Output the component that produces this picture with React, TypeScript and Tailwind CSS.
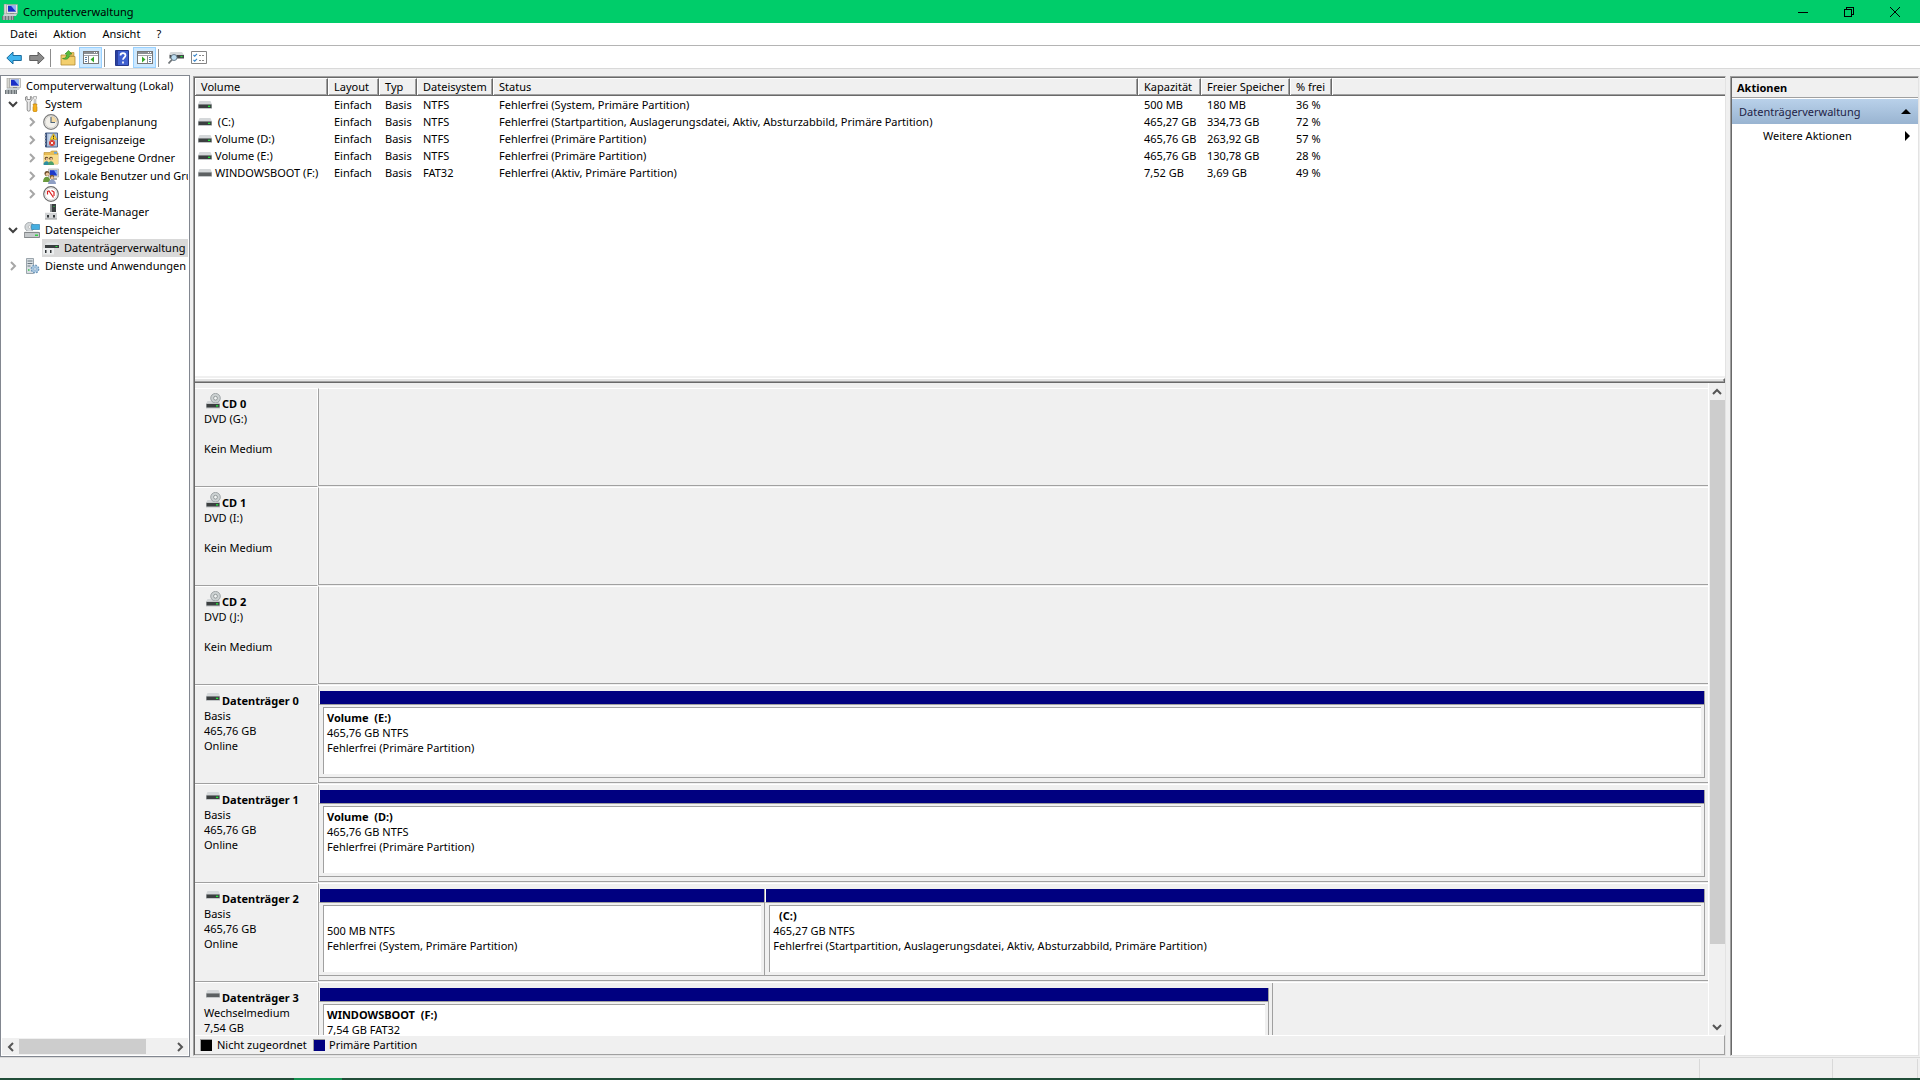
import type { ReactNode } from "react";

type IconProps = { className?: string };

const ComputerIcon = ({ className = "size-4" }: IconProps) => (
  <svg viewBox="0 0 16 16" className={`${className} shrink-0`}>
    <path d="M2 0h3v10H2z" fill="#d8d8d2" stroke="#8a8a86" strokeWidth=".5" />
    <path d="M4.500.5h11v9h-11z" fill="#e6e6e0" stroke="#9a9a98" strokeWidth=".6" />
    <path d="M6 1.700h8v6H6z" fill="#1a2fc8" />
    <path d="M9 1.700h5v6z" fill="#8fb4f4" />
    <path d="M8 9h4v1.500H8z" fill="#8c8c8c" />
    <path d="M2 10h13l-1 2H1z" fill="#c9d0d4" />
    <path d="M0 12h12v4H0z" fill="#6d7478" />
    <path d="M1 13h2m1 0h2m1 0h2m1 0h1M1 15h2m1 0h2m1 0h2m1 0h1" stroke="#e5eaea" strokeWidth=".9" />
  </svg>
);

const ToolsIcon = () => (
  <svg viewBox="0 0 16 16" className="size-4 shrink-0">
    <path
      d="M1.500 1v3.200l1.700 1.600V14c0 1.600 3 1.600 3 0V5.800L8 4.200V1L6.400.5V3.500H3.100V.500z"
      fill="#e9e9e9"
      stroke="#777"
      strokeWidth=".8"
    />
    <path d="M9.500.5h3v2l-.7 1v4h-1.600v-4l-.7-1z" fill="#eee" stroke="#888" strokeWidth=".6" />
    <path d="M9 8h4l-.5 2 .5 1v4c-1 1.200-3 1.200-4 0v-4l.5-1z" fill="#f5b01c" stroke="#b97a08" strokeWidth=".6" />
  </svg>
);

const ClockIcon = () => (
  <svg viewBox="0 0 16 16" className="size-4 shrink-0">
    <circle cx="8" cy="8" r="7.300" fill="#f2f0ea" stroke="#7d7d7d" strokeWidth="1.200" />
    <path d="M8 8V2a6 6 0 0 1 6 6z" fill="#f3d9a2" />
    <circle cx="8" cy="8" r="5.800" fill="none" stroke="#c6c6c6" strokeWidth=".6" />
    <path d="M8 3v5.500h4" fill="none" stroke="#4f6478" strokeWidth="1.100" />
  </svg>
);

const EventIcon = () => (
  <svg viewBox="0 0 16 16" className="size-4 shrink-0">
    <path d="M2.500 1h12v14h-12z" fill="#a8bddb" stroke="#4b628a" />
    <path d="M2 1h2v14H2z" fill="#3e547c" />
    <path d="M1 3h2M1 6h2M1 9h2M1 12h2" stroke="#ccc" />
    <path d="M5.500 3h3M5.500 5h2M5.500 7h2M5.500 9h2M5.500 11h2" stroke="#fff" strokeWidth=".8" />
    <path d="M10.500 1.500 14 7.500H7z" fill="#ffd42a" stroke="#b58c0a" strokeWidth=".5" />
    <path d="M10.500 3.500v2m0 .6v.8" stroke="#222" strokeWidth=".9" />
    <circle cx="9" cy="11" r="3" fill="#d73b30" />
    <path d="m7.800 9.800 2.400 2.400m0-2.400-2.400 2.400" stroke="#fff" strokeWidth=".9" />
  </svg>
);

const SharedFolderIcon = () => (
  <svg viewBox="0 0 16 16" className="size-4 shrink-0">
    <path d="M1 2.500h6l1.500-1.500H14v2h1v11H1z" fill="#e8bd55" stroke="#b78a2a" strokeWidth=".6" />
    <path d="M1 5h14v9H1z" fill="#f8dc8c" />
    <path d="M11 1.800h3v2h-3z" fill="#6aa6d8" />
    <circle cx="3.500" cy="8.500" r="1.800" fill="#5c4326" />
    <circle cx="8" cy="8.500" r="1.800" fill="#5c4326" />
    <circle cx="3.800" cy="9" r="1.200" fill="#e9bf94" />
    <circle cx="8.300" cy="9" r="1.200" fill="#e9bf94" />
    <path d="M.5 15c0-5 6-5 6 0z" fill="#2c8ea0" />
    <path d="M5 15c0-5 6-5 6 0z" fill="#4da06a" />
  </svg>
);

const UsersIcon = () => (
  <svg viewBox="0 0 16 16" className="size-4 shrink-0">
    <path d="M5.500 1h10v8h-10z" fill="#e3e3dc" stroke="#999" strokeWidth=".6" />
    <path d="M6.800 2.200h7.400v5.400H6.800z" fill="#1d39cb" />
    <path d="M11 2.200h3.200v5.400z" fill="#86aef2" />
    <path d="M8 10h6v2H8z" fill="#aaa" />
    <circle cx="4" cy="5.500" r="2.500" fill="#6a4d2c" />
    <circle cx="4.400" cy="6.300" r="1.700" fill="#ecc59c" />
    <path d="M0 14c0-7 7.500-7 7.500 0z" fill="#6a9a3e" />
    <circle cx="9" cy="9" r="2.200" fill="#7b5a30" />
    <circle cx="9.200" cy="9.700" r="1.500" fill="#ecc59c" />
    <path d="M5 16c0-6 8-6 8 0z" fill="#8f9fc4" />
  </svg>
);

const GaugeIcon = () => (
  <svg viewBox="0 0 16 16" className="size-4 shrink-0">
    <circle cx="8" cy="8" r="7.300" fill="#fff" stroke="#6c6c6c" strokeWidth="1.200" />
    <circle cx="8" cy="8" r="5.900" fill="none" stroke="#c4c4c4" strokeWidth=".6" />
    <path d="M4.500 8.500V5.500L6 5l4.500 6.500M8.500 4.500l2.500 1.500v4" fill="none" stroke="#d81f1f" strokeWidth="1.200" />
  </svg>
);

const DeviceManagerIcon = () => (
  <svg viewBox="0 0 16 16" className="size-4 shrink-0">
    <path d="M7.500 0H13v8H7.500z" fill="#3b3f42" />
    <path d="M7.500 0H9v8H7.500z" fill="#8a8e91" />
    <path d="M10.500 2h1v1h-1z" fill="#35e04c" />
    <path d="M2 8h12v7H2z" fill="#d2d4d6" />
    <path d="M2 8h12v1H2z" fill="#f4f4f4" />
    <path d="M4 11h2v2.500H4zm6 0h2v2.500h-2z" fill="#33373a" />
    <path d="M2 14.500h12v1H2z" fill="#9a9c9e" />
  </svg>
);

const StorageIcon = () => (
  <svg viewBox="0 0 16 16" className="size-4 shrink-0">
    <circle cx="5.500" cy="5" r="4.600" fill="#d4d8da" stroke="#8c9296" strokeWidth=".7" />
    <circle cx="5.500" cy="5" r="1.300" fill="#fff" stroke="#999" strokeWidth=".5" />
    <path d="M7.500 2.500h8v5h-8z" fill="#45aee0" stroke="#2379a8" strokeWidth=".6" />
    <path d="M1 9h13l1.500 1.500H0z" fill="#eceeee" />
    <path d="M.3 10.500h15.200v5H.3z" fill="#c4c8ca" stroke="#6d7174" strokeWidth=".8" />
    <path d="M11 12.500h3V14h-3z" fill="#2fd443" />
  </svg>
);

const DiskManagementIcon = () => (
  <svg viewBox="0 0 16 16" className="size-4 shrink-0">
    <path d="M4 2.500h10.500L16 5H2z" fill="#e2e5e6" />
    <path d="M2 5h14v3H2z" fill="#3a3e40" />
    <path d="M12.500 6h2v1h-2z" fill="#2be03f" />
    <path d="M0 8h11v6.500H0z" fill="#eceeef" />
    <path d="M2 10h1.500v3H2zm5 0h1.500v3H7z" fill="#303436" />
  </svg>
);

const ServicesIcon = () => (
  <svg viewBox="0 0 16 16" className="size-4 shrink-0">
    <path d="M2.500.5h7v15h-7z" fill="#d9dfe3" stroke="#87929a" strokeWidth=".8" />
    <path d="M3.500 3h5M3.500 5.500h5M3.500 8h3" stroke="#6a7882" />
    <path d="M4 12h1.500" stroke="#35c248" strokeWidth="1.500" />
    <circle cx="11" cy="11" r="3.600" fill="#a7c6e0" stroke="#6d96ba" strokeWidth="1.600" strokeDasharray="1.700 1.100" />
    <circle cx="11" cy="11" r="3" fill="#a7c6e0" />
    <circle cx="11" cy="11" r="1.200" fill="#fff" stroke="#6d96ba" strokeWidth=".6" />
  </svg>
);

const DriveIcon = ({ removable = false }: { removable?: boolean }) => (
  <svg viewBox="0 0 14 8" className="h-2 w-3.5 shrink-0">
    <path d="M1.500 0h11L14 3.500H0z" fill="#d5d8da" />
    <path d="M0 3h14v5H0z" fill="#c4c7c9" />
    <path d="M.5 3.500h13v3.500H.5z" fill={removable ? "#5c6062" : "#3b3f40"} />
    {!removable && <path d="M10 4.700h2.200V6H10z" fill="#22e83a" />}
  </svg>
);

const OpticalDriveIcon = () => (
  <svg viewBox="0 0 15 16" className="h-4 w-[15px] shrink-0">
    <path d="M1.500 8h11L14 11H0z" fill="#d5d8da" />
    <circle cx="9.500" cy="5.200" r="4.800" fill="#ccd1d2" stroke="#8f9698" strokeWidth=".8" />
    <circle cx="9.500" cy="5.200" r="1.900" fill="#f3f5f5" stroke="#7f8688" strokeWidth=".8" />
    <path d="M0 10h14v5.500H0z" fill="#c4c7c9" />
    <path d="M.5 11h13v3.500H.5z" fill="#3b3f40" />
    <path d="M10 12.200h2.200v1.300H10z" fill="#22e83a" />
  </svg>
);

const ArrowIcon = ({ back = false }: { back?: boolean }) => (
  <svg viewBox="0 0 16 14" className="h-3.5 w-4">
    {back ? (
      <path d="M.8 7 7 1v3.500h8.300v5H7V13z" fill="#3fb4ee" stroke="#1b6c9e" />
    ) : (
      <path d="M15.200 7 9 1v3.500H.7v5H9V13z" fill="#8c8c8c" stroke="#606060" />
    )}
  </svg>
);

const FolderUpIcon = () => (
  <svg viewBox="0 0 16 16" className="size-4">
    <path d="M1 5h5l1.500 1.500H15V15H1z" fill="#f3cf6e" stroke="#b08a34" strokeWidth=".8" />
    <path d="M10.500 2.500H14V6h-3.500z" fill="#e7c15c" stroke="#b08a34" strokeWidth=".6" />
    <path d="M2.500 8.500c3 0 4-1.500 4.300-4.500H5L8.500.5 12 4H9.800c-.3 4.500-3 6.500-7.300 4.500z" fill="#58bb3c" stroke="#2d8120" strokeWidth=".6" />
  </svg>
);

const PaneIcon = ({ right = false }: { right?: boolean }) => (
  <svg viewBox="0 0 16 13" className="h-[13px] w-4" shapeRendering="crispEdges">
    <path d="M.5.5h15v12H.5z" fill="#fff" stroke="#777" />
    <path d="M1 1h14v2H1z" fill="#8a8e94" />
    <path d="M11 1h1v1h-1zm2 0h1v1h-1z" fill="#fff" />
    <path d="M1 4.500h14" stroke="#a3a7ac" />
    <path d={right ? "M10.500 5v7" : "M5.500 5v7"} stroke="#888" />
    <path d={right ? "M12 6.500h2M12 8.500h2M12 10.500h2" : "M2 6.500h2M2 8.500h2M2 10.500h2"} stroke="#5a7ea8" />
    <path d={right ? "M5 5.500v6L8.500 8.500z" : "M11 5.500v6L7.500 8.500z"} fill="#35a82a" shapeRendering="auto" />
  </svg>
);

const HelpIcon = () => (
  <svg viewBox="0 0 14 16" className="h-4 w-3.5">
    <path d="M.5.5h13v15H.5z" fill="#3f5fcf" stroke="#24378c" />
    <path d="M1 1h2v14H1z" fill="#2a409f" />
    <path d="M5.500 5.500c0-3.300 5-3.300 5 0 0 2-2.500 2-2.500 4.300M8 11.500v2" fill="none" stroke="#fff" strokeWidth="1.700" />
  </svg>
);

const RescanIcon = () => (
  <svg viewBox="0 0 16 13" className="h-[13px] w-4">
    <path d="M2.500 1H14l2 3H1z" fill="#d5d8da" />
    <path d="M1.500 4H16v3.500H1.500z" fill="#45494b" />
    <path d="M12.500 5h2v1.200h-2z" fill="#22e83a" />
    <circle cx="6" cy="6.500" r="3" fill="#bcdcf0" stroke="#6b7e8c" />
    <path d="m4 8.700-3.500 3.800" stroke="#707578" strokeWidth="1.700" />
  </svg>
);

const ChecklistIcon = () => (
  <svg viewBox="0 0 16 13" className="h-[13px] w-4">
    <path d="M.5.5h15v12H.5z" fill="#fff" stroke="#858585" />
    <path d="m2.500 4 1.200 1.200L6 2.800M2.500 9l1.200 1.200L6 7.800" fill="none" stroke="#3584c8" strokeWidth="1.100" />
    <path d="M8 4.500h2m1 0h2M8 9.500h2m1 0h2" stroke="#888" />
  </svg>
);

const Chevron = ({ d, className }: { d: string; className: string }) => (
  <svg viewBox="0 0 10 10" className={`size-2.5 shrink-0 ${className}`}>
    <path d={d} fill="none" stroke="currentColor" strokeWidth="2" />
  </svg>
);

const CHEVRON = {
  left: "M7 1 3 5l4 4",
  right: "M3 1l4 4-4 4",
  up: "M1 7l4-4 4 4",
  down: "M1 3l4 4 4-4",
};

type TreeNode = {
  label: string;
  icon: ReactNode;
  level: 0 | 1 | 2;
  state?: "open" | "closed";
  selected?: boolean;
};

const tree: TreeNode[] = [
  { label: "Computerverwaltung (Lokal)", icon: <ComputerIcon />, level: 0 },
  { label: "System", icon: <ToolsIcon />, level: 1, state: "open" },
  { label: "Aufgabenplanung", icon: <ClockIcon />, level: 2, state: "closed" },
  { label: "Ereignisanzeige", icon: <EventIcon />, level: 2, state: "closed" },
  { label: "Freigegebene Ordner", icon: <SharedFolderIcon />, level: 2, state: "closed" },
  { label: "Lokale Benutzer und Gruppen", icon: <UsersIcon />, level: 2, state: "closed" },
  { label: "Leistung", icon: <GaugeIcon />, level: 2, state: "closed" },
  { label: "Geräte-Manager", icon: <DeviceManagerIcon />, level: 2 },
  { label: "Datenspeicher", icon: <StorageIcon />, level: 1, state: "open" },
  { label: "Datenträgerverwaltung", icon: <DiskManagementIcon />, level: 2, selected: true },
  { label: "Dienste und Anwendungen", icon: <ServicesIcon />, level: 1, state: "closed" },
];

const columns = ["Volume", "Layout", "Typ", "Dateisystem", "Status", "Kapazität", "Freier Speicher", "% frei"];

const volumes = [
  ["", "Einfach", "Basis", "NTFS", "Fehlerfrei (System, Primäre Partition)", "500 MB", "180 MB", "36 %"],
  [
    " (C:)",
    "Einfach",
    "Basis",
    "NTFS",
    "Fehlerfrei (Startpartition, Auslagerungsdatei, Aktiv, Absturzabbild, Primäre Partition)",
    "465,27 GB",
    "334,73 GB",
    "72 %",
  ],
  ["Volume (D:)", "Einfach", "Basis", "NTFS", "Fehlerfrei (Primäre Partition)", "465,76 GB", "263,92 GB", "57 %"],
  ["Volume (E:)", "Einfach", "Basis", "NTFS", "Fehlerfrei (Primäre Partition)", "465,76 GB", "130,78 GB", "28 %"],
  ["WINDOWSBOOT (F:)", "Einfach", "Basis", "FAT32", "Fehlerfrei (Aktiv, Primäre Partition)", "7,52 GB", "3,69 GB", "49 %"],
];

type Partition = { name: string; size: string; status?: string; share: number };
type Disk = {
  name: string;
  kind: "optical" | "fixed" | "removable";
  lines: string[];
  partitions: Partition[];
};

const disks: Disk[] = [
  { name: "CD 0", kind: "optical", lines: ["DVD (G:)", "", "Kein Medium"], partitions: [] },
  { name: "CD 1", kind: "optical", lines: ["DVD (I:)", "", "Kein Medium"], partitions: [] },
  { name: "CD 2", kind: "optical", lines: ["DVD (J:)", "", "Kein Medium"], partitions: [] },
  {
    name: "Datenträger 0",
    kind: "fixed",
    lines: ["Basis", "465,76 GB", "Online"],
    partitions: [{ name: "Volume  (E:)", size: "465,76 GB NTFS", status: "Fehlerfrei (Primäre Partition)", share: 100 }],
  },
  {
    name: "Datenträger 1",
    kind: "fixed",
    lines: ["Basis", "465,76 GB", "Online"],
    partitions: [{ name: "Volume  (D:)", size: "465,76 GB NTFS", status: "Fehlerfrei (Primäre Partition)", share: 100 }],
  },
  {
    name: "Datenträger 2",
    kind: "fixed",
    lines: ["Basis", "465,76 GB", "Online"],
    partitions: [
      { name: " ", size: "500 MB NTFS", status: "Fehlerfrei (System, Primäre Partition)", share: 32.2 },
      {
        name: "  (C:)",
        size: "465,27 GB NTFS",
        status: "Fehlerfrei (Startpartition, Auslagerungsdatei, Aktiv, Absturzabbild, Primäre Partition)",
        share: 67.8,
      },
    ],
  },
  {
    name: "Datenträger 3",
    kind: "removable",
    lines: ["Wechselmedium", "7,54 GB"],
    partitions: [{ name: "WINDOWSBOOT  (F:)", size: "7,54 GB FAT32", share: 100 }],
  },
];

const TitleBar = () => (
  <header className="flex h-[23px] shrink-0 items-center bg-[#00cd6a] pr-0.5 pl-0.5">
    <ComputerIcon />
    <h1 className="ml-[5px] flex-1">Computerverwaltung</h1>
    <button aria-label="Minimieren" className="flex h-full w-[46px] items-center justify-center">
      <svg viewBox="0 0 10 10" className="size-2.5" shapeRendering="crispEdges">
        <path d="M0 5.500h10" stroke="#000" />
      </svg>
    </button>
    <button aria-label="Verkleinern" className="flex h-full w-[46px] items-center justify-center">
      <svg viewBox="0 0 10 10" className="size-2.5" shapeRendering="crispEdges">
        <path d="M.5 2.500h7v7h-7zM2.500 2V.5h7v7H8" fill="none" stroke="#000" />
      </svg>
    </button>
    <button aria-label="Schließen" className="flex h-full w-[46px] items-center justify-center">
      <svg viewBox="0 0 10 10" className="size-2.5">
        <path d="M0 0l10 10M10 0 0 10" stroke="#000" />
      </svg>
    </button>
  </header>
);

const MenuBar = () => (
  <nav className="flex h-[23px] shrink-0 items-center gap-4 border-b border-[#b4b4b4] bg-white pl-2.5">
    <button>Datei</button>
    <button>Aktion</button>
    <button>Ansicht</button>
    <button>?</button>
  </nav>
);

const ToolButton = ({ label, active = false, children }: { label: string; active?: boolean; children: ReactNode }) => (
  <button
    aria-label={label}
    className={`flex h-[21px] w-[23px] items-center justify-center border ${
      active ? "border-[#99d1ff] bg-[#cce8ff]" : "border-transparent"
    }`}
  >
    {children}
  </button>
);

const ToolSeparator = () => <span className="mr-[5px] ml-0.5 h-[18px] w-px bg-[#8c8c8c]" />;

const Toolbar = () => (
  <div className="flex h-[23px] shrink-0 items-center border-b border-[#d9d9d9] bg-white pt-px pl-0.5">
    <ToolButton label="Zurück">
      <ArrowIcon back />
    </ToolButton>
    <ToolButton label="Vorwärts">
      <ArrowIcon />
    </ToolButton>
    <ToolSeparator />
    <ToolButton label="Eine Ebene nach oben">
      <FolderUpIcon />
    </ToolButton>
    <ToolButton label="Konsolenstruktur ein-/ausblenden" active>
      <PaneIcon />
    </ToolButton>
    <ToolSeparator />
    <ToolButton label="Hilfe">
      <HelpIcon />
    </ToolButton>
    <ToolButton label="Aktionsbereich ein-/ausblenden" active>
      <PaneIcon right />
    </ToolButton>
    <ToolSeparator />
    <ToolButton label="Datenträger neu einlesen">
      <RescanIcon />
    </ToolButton>
    <ToolButton label="Einstellungen">
      <ChecklistIcon />
    </ToolButton>
  </div>
);

const indents = ["pl-0.5", "pl-[6px]", "pl-[25px]"];

const TreePane = () => (
  <aside className="flex w-[190px] shrink-0 flex-col border border-[#828790] bg-white p-px">
    <ul className="min-h-0 flex-1 overflow-hidden">
      {tree.map((node) => (
        <li key={node.label} className={`flex h-[18px] items-center ${indents[node.level]}`}>
          {node.level > 0 && (
            <span className="mr-[3px] flex w-3">
              {node.state === "open" && <Chevron d={CHEVRON.down} className="text-[#404040]" />}
              {node.state === "closed" && <Chevron d={CHEVRON.right} className="text-[#a6a6a6]" />}
            </span>
          )}
          <span className={`flex h-full min-w-0 flex-1 items-center gap-[5px] pl-px ${node.selected ? "bg-[#d9d9d9]" : ""}`}>
            {node.icon}
            <span className="whitespace-nowrap">{node.label}</span>
          </span>
        </li>
      ))}
    </ul>
    <div className="flex h-[17px] items-center bg-[#f0f0f0]">
      <button aria-label="Nach links" className="flex w-[17px] justify-center">
        <Chevron d={CHEVRON.left} className="text-[#555]" />
      </button>
      <div className="h-[15px] flex-1">
        <div className="h-full w-5/6 bg-[#cdcdcd]" />
      </div>
      <button aria-label="Nach rechts" className="flex w-[17px] justify-center">
        <Chevron d={CHEVRON.right} className="text-[#555]" />
      </button>
    </div>
  </aside>
);

const VolumeList = () => (
  <div className="h-[298px] shrink-0 overflow-hidden bg-white">
    <table className="w-full table-fixed border-separate border-spacing-0 text-left whitespace-nowrap">
      <colgroup>
        <col className="w-[133px]" />
        <col className="w-[51px]" />
        <col className="w-[38px]" />
        <col className="w-[76px]" />
        <col className="w-[645px]" />
        <col className="w-[63px]" />
        <col className="w-[89px]" />
        <col className="w-[42px]" />
        <col />
      </colgroup>
      <thead>
        <tr>
          {columns.map((column) => (
            <th
              key={column}
              className="h-[18px] border-t border-r border-b border-t-white border-r-[#696969] border-b-[#696969] bg-[#f0f0f0] p-0 pl-[6px] leading-4 font-normal shadow-[inset_1px_0_#fff,inset_-1px_-1px_#a0a0a0]"
            >
              {column}
            </th>
          ))}
          <td className="border-t border-b border-t-white border-b-[#696969] bg-[#f0f0f0] shadow-[inset_1px_0_#fff,inset_0_-1px_#a0a0a0]" />
        </tr>
      </thead>
      <tbody>
        {volumes.map((volume, row) => (
          <tr key={row}>
            {volume.map((value, i) => (
              <td key={i} className={`h-[17px] p-0 leading-[17px] ${i === 0 ? "pl-[3px]" : "pl-[6px]"}`}>
                {i === 0 ? (
                  <span className="flex items-center gap-[3px] whitespace-pre">
                    <DriveIcon removable={row === 4} />
                    {value}
                  </span>
                ) : (
                  value
                )}
              </td>
            ))}
          </tr>
        ))}
      </tbody>
    </table>
  </div>
);

const PartitionBox = ({ partition }: { partition: Partition }) => (
  <div className="flex min-w-0 flex-col border-r border-b border-[#a0a0a0]" style={{ width: `${partition.share}%` }}>
    <div className="h-3.5 border-b border-l border-b-[#a0a0a0] border-l-white bg-[#000080]" />
    <div className="mt-0.5 mr-[3px] mb-[3px] ml-1 flex-1 overflow-hidden border-t border-l border-[#a0a0a0] bg-white pt-0.5 pl-[3px] leading-[15px] whitespace-pre">
      <p className="font-bold">{partition.name}</p>
      <p>{partition.size}</p>
      {partition.status && <p>{partition.status}</p>}
    </div>
  </div>
);

const DiskRow = ({ disk }: { disk: Disk }) => (
  <section className="flex h-[99px] shrink-0">
    <div className="w-[123px] shrink-0 border-t border-r border-b border-t-white border-r-white border-b-[#a0a0a0] pt-1 pl-[9px] leading-[15px]">
      <div className="flex h-[18px] items-end pl-0.5">
        <span className={disk.kind === "optical" ? "flex h-full w-4 items-start" : "flex h-full w-4 items-center pb-1"}>
          {disk.kind === "optical" ? <OpticalDriveIcon /> : <DriveIcon removable={disk.kind === "removable"} />}
        </span>
        <h2 className="font-bold whitespace-nowrap">{disk.name}</h2>
      </div>
      {disk.lines.map((line, i) => (
        <p key={i} className="h-[15px]">
          {line}
        </p>
      ))}
    </div>
    <div className="mb-px flex min-w-0 flex-1 border-t border-b border-l border-t-white border-b-[#a0a0a0] border-l-[#a0a0a0]">
      {disk.partitions.length > 0 && (
        <div
          className={`flex pt-[5px] pr-[3px] pb-1 ${
            disk.kind === "removable" ? "w-[68.7%] border-r border-[#a0a0a0]" : "w-full"
          }`}
        >
          {disk.partitions.map((partition) => (
            <PartitionBox key={partition.size} partition={partition} />
          ))}
        </div>
      )}
    </div>
  </section>
);

const VerticalScrollbar = () => (
  <div className="flex w-[17px] shrink-0 flex-col items-center border-l border-white bg-[#f0f0f0]">
    <button aria-label="Nach oben" className="flex h-[17px] items-center">
      <Chevron d={CHEVRON.up} className="text-[#555]" />
    </button>
    <div className="w-[15px] flex-1">
      <div className="h-[88%] w-full bg-[#cdcdcd]" />
    </div>
    <button aria-label="Nach unten" className="flex h-[17px] items-center">
      <Chevron d={CHEVRON.down} className="text-[#555]" />
    </button>
  </div>
);

const Legend = () => (
  <footer className="flex h-5 shrink-0 items-center border-t border-r border-b border-t-white border-r-[#a0a0a0] border-b-[#a0a0a0] pl-[5px]">
    <span className="mr-[5px] size-3 border-t border-l border-[#a0a0a0] bg-black" />
    <span className="w-24">Nicht zugeordnet</span>
    <span className="mr-1 size-3 border-t border-l border-[#a0a0a0] bg-[#000080]" />
    <span>Primäre Partition</span>
  </footer>
);

const ActionsPane = () => (
  <aside className="mt-px mb-px flex w-[189px] shrink-0 flex-col border border-t-[#a0a0a0] border-r-[#e3e3e3] border-b-[#e3e3e3] border-l-[#a0a0a0]">
    <div className="flex-1 border-t border-l border-[#696969] bg-white">
      <h2 className="h-5 border-b border-[#a0a0a0] bg-[#f0f0f0] pl-[5px] leading-[19px] font-bold">Aktionen</h2>
      <button className="mt-px flex h-[25px] w-full items-center justify-between bg-linear-to-b from-[#b9d1ea] to-[#99b4d1] pr-[7px] pl-[7px] text-[#1e1e46]">
        Datenträgerverwaltung
        <svg viewBox="0 0 10 5" className="h-[5px] w-2.5">
          <path d="M5 0l5 5H0z" fill="#000" />
        </svg>
      </button>
      <button className="flex h-6 w-full items-center justify-between pr-2 pl-[31px]">
        Weitere Aktionen
        <svg viewBox="0 0 5 10" className="h-2.5 w-[5px]">
          <path d="M0 0l5 5-5 5z" />
        </svg>
      </button>
    </div>
  </aside>
);

export default function App() {
  return (
    <div className="flex h-screen flex-col overflow-hidden bg-[#f0f0f0] font-['Noto_Sans','Open_Sans',sans-serif] text-[11px] leading-4 text-black">
      <TitleBar />
      <MenuBar />
      <Toolbar />

      <div className="flex min-h-0 flex-1 pt-[6px] pr-px">
        <TreePane />

        <main className="mt-px mr-1 mb-px ml-[3px] flex min-w-0 flex-1 flex-col border border-t-[#a0a0a0] border-r-[#e3e3e3] border-b-[#e3e3e3] border-l-[#a0a0a0]">
          <div className="flex min-h-0 flex-1 flex-col border-t border-l border-[#696969]">
            <VolumeList />
            {/* splitter between list and graphical view */}
            <div className="mt-0.5 h-[5px] shrink-0 border-t border-r border-b border-t-white border-r-[#696969] border-b-[#696969] bg-[#e3e3e3] shadow-[inset_-1px_-1px_#a0a0a0]" />
            <div className="flex min-h-0 flex-1">
              <div className="flex min-w-0 flex-1 flex-col overflow-hidden pt-[5px]">
                {disks.map((disk) => (
                  <DiskRow key={disk.name} disk={disk} />
                ))}
              </div>
              <VerticalScrollbar />
            </div>
            <Legend />
          </div>
        </main>

        <ActionsPane />
      </div>

      <div className="flex h-[21px] shrink-0 justify-end border-t border-[#d9d9d9] pt-px pr-0.5">
        <span className="w-[133px] border-l border-[#d9d9d9]" />
        <span className="w-[86px] border-r border-l border-[#d9d9d9]" />
      </div>
      <div className="flex h-0.5 shrink-0 bg-[#214d38] pl-[294px]">
        <span className="w-12 bg-[#14914f]" />
      </div>
    </div>
  );
}
